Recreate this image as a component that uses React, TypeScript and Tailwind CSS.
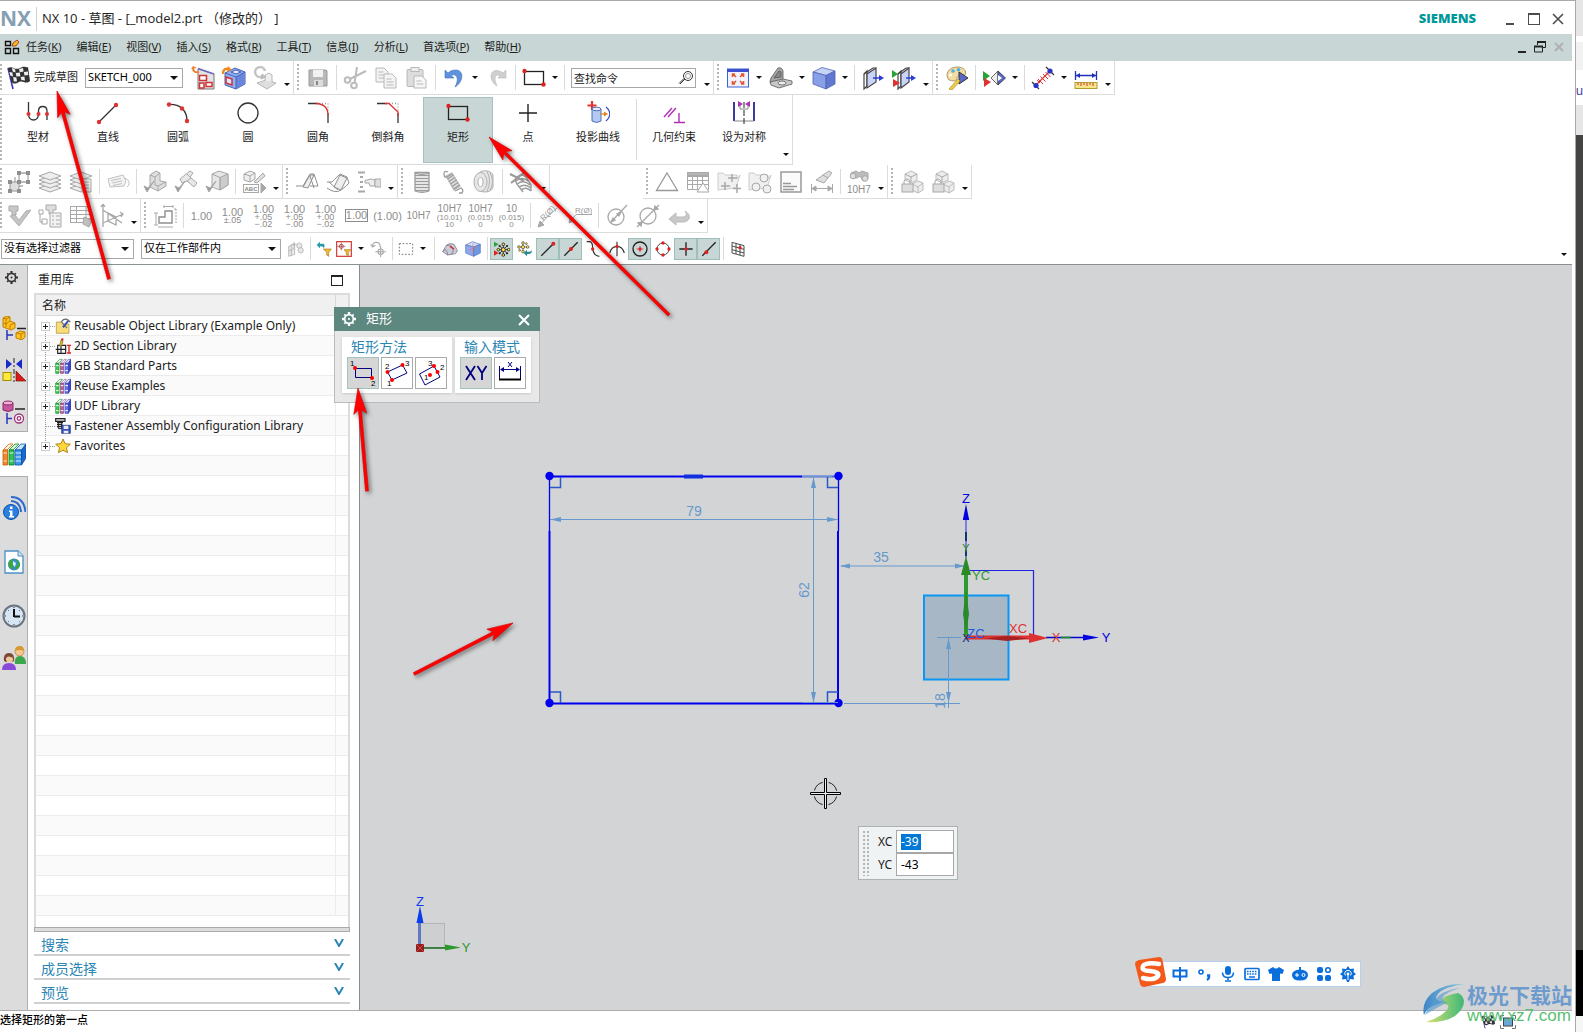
import type { ReactNode } from 'react';

interface IconProps {
  name: string;
  size?: string;
}

interface TreeNode {
  label: string;
  icon: string;
  leaf?: boolean;
}

const G = '#a8a8a8';
const LG = '#dedede';

const icons: Record<string, ReactNode> = {
  // finish / sketch
  flag: (
    <g>
      <path d="M2 2 L7 23" stroke="#3a35c8" strokeWidth="1.6" />
      <path d="M2 2 C6 -1 9 5 14 2 S20 2 22 1 L24 15 C20 19 17 14 13 16 S8 18 5.5 16Z" fill="#333" />
      <path d="M6 2l3 1 .6 3.5-3-1zM13 3l4-1 .6 3.5-3.8.8zM9.8 7l4-.4.6 3.6-4 .3zM17.8 6l4-.4.5 3.4-3.8.4zM3.4 6l3 .6.6 4-2.8-1zM7.2 11l3.2.4.6 4-3.2.2zM14.6 11l3.8-.6.6 4-3.6-.5z" fill="#eee" />
    </g>
  ),
  reattach: (
    <g>
      <path d="M7 3 L23 8 V23 H7Z" fill="#e4e4e8" stroke="#777" />
      <path d="M7 2.500 L23 8" stroke="#6a6ac0" strokeWidth="1.400" />
      <path d="M8.500 9.500h7v5h-7zM8.500 17h4.500v5H8.500zM15 16.500h6v4h-6z" fill="#fff" stroke="#c33" strokeWidth="1.500" />
      <path d="M8 6 C4 7 2 5 2 2" stroke="#f08030" strokeWidth="2" fill="none" />
      <path d="M0 3l2-3 4 2z" fill="#f08030" />
    </g>
  ),
  orient: (
    <g>
      <path d="M3 7 L13 2 L23 6 V18 L14 23 L3 19Z" fill="#8fb0f2" stroke="#4a62b8" />
      <path d="M14 11 L23 6 V18 L14 23Z" fill="#6a86dc" />
      <path d="M3 7 L14 11 V23 M14 11 L23 6" stroke="#4a62b8" fill="none" />
      <path d="M9 6l5-2 5 2-5 2z" fill="#e8eefc" stroke="#4a62b8" />
      <path d="M4 11 L10 13 V19 L4 17Z" fill="#dbe6ff" stroke="#c33" strokeWidth="1.500" />
      <path d="M1 8 C1 3 4 2 7 3" stroke="#f08a20" strokeWidth="2.500" fill="none" />
      <path d="M6 0l4 4-5 2z" fill="#f08a20" />
    </g>
  ),
  update: (
    <g stroke="#b8b8b8">
      <path d="M4 17 L13 14 L23 17 L14 23Z" fill={LG} />
      <path d="M12 15 V9 L16 7 L19 9 V16" fill="#eee" />
      <path d="M8 11 A5 5 0 1 1 12 5" fill="none" strokeWidth="2.500" stroke="#c4c4c4" />
      <path d="M9 8l-1 5 5-2z" fill="#bbb" />
    </g>
  ),
  save: (
    <g>
      <path d="M3 4h17l1 1v15H3z" fill="#b9b9b9" stroke="#999" />
      <rect x="7" y="4" width="10" height="7" fill="#f2f2f2" />
      <rect x="8" y="14" width="9" height="6" fill="#ddd" />
      <rect x="10" y="15" width="2" height="4" fill="#888" />
    </g>
  ),
  cut: (
    <g fill="none" stroke="#bcbcbc" strokeWidth="2">
      <circle cx="4.500" cy="14" r="2.800" />
      <circle cx="11" cy="19.500" r="2.800" />
      <path d="M7 13 L23 5 M11.500 17 L14 1" />
    </g>
  ),
  copy: (
    <g stroke="#b8b8b8" fill="#f4f4f4">
      <path d="M2 2h8l4 4v10H2z" />
      <path d="M4.500 6h5M4.500 9h7M4.500 12h7" />
      <path d="M10 8h8l4 4v10H10z" />
      <path d="M12.500 13h5M12.500 16h7M12.500 19h7" />
    </g>
  ),
  paste: (
    <g stroke="#b8b8b8">
      <rect x="2" y="3.500" width="16" height="17" rx="1" fill="#ddd" />
      <rect x="6" y="1.500" width="8" height="4" fill="#eee" />
      <path d="M9 10h8l4 4v8H9z" fill="#f6f6f6" />
      <path d="M11.500 15h5M11.500 18h7" />
    </g>
  ),
  undo: (
    <g>
      <path d="M3 4 V12 H12 L9 9.500 C14 7 18 12 13 21 C22 16 22 4 14 4 C10 4 8 5 6 7Z" fill="#5f92dc" stroke="#3f70bd" strokeWidth=".6" />
    </g>
  ),
  redo: <path d="M21 4 V12 H13 L15 10 C11 7 8 11 12 20 C4 15 4 4 12 4.500 C15 5 17 6 18 7Z" fill="#cfcfcf" stroke="#bbb" strokeWidth=".6" />,
  rect: (
    <g>
      <rect x="2.500" y="5.500" width="19" height="13" fill="none" stroke="#222" strokeWidth="1.300" />
      <circle cx="2.500" cy="5" r="2.200" fill="#d22" />
      <circle cx="21.500" cy="18.500" r="2.200" fill="#d22" />
    </g>
  ),
  fit: (
    <g>
      <rect x="1.500" y="3" width="21" height="18" fill="#f2f2ff" stroke="#3b62d0" />
      <path d="M1 3h22v3H1z" fill="#3b4fd0" />
      <g stroke="#e4572e" strokeWidth="1.600" fill="none">
        <path d="M10 11l-3-3M14 11l3-3M10 15l-3 3M14 15l3 3M6.500 11V8H9M17.500 11V8H15M6.500 15v3H9M17.500 15v3H15" />
      </g>
    </g>
  ),
  shade: (
    <g stroke="#555" strokeWidth=".8">
      <path d="M2 12 L9 2 Q13 1 14 5 V15 L8 19 L1 16Z" fill="#a8a8a8" />
      <path d="M1 16 L14 13 L23 15 V18 L10 22 L2 19Z" fill="#c8c8c8" />
      <ellipse cx="13" cy="17" rx="4" ry="2" fill="#eee" />
      <path d="M5 12 L10 5 L12 6 V11Z" fill="#888" />
    </g>
  ),
  cube: (
    <g stroke="#4f63b8" strokeWidth=".8">
      <path d="M1 6 L10 1.500 L23 5 L14 9.500Z" fill="#c6d4f6" />
      <path d="M1 6 L14 9.500 V23 L1 18Z" fill="#8aa0e6" />
      <path d="M14 9.500 L23 5 V18 L14 23Z" fill="#6078d0" />
    </g>
  ),
  section: (
    <g>
      <path d="M3 8 L6 5 V20 L3 23Z" fill="#fff" stroke="#444" strokeWidth="1.200" />
      <path d="M6 8 L15 2 V16 L6 22Z" fill="#c9d5f8" stroke="#444" strokeWidth="1.200" />
      <path d="M3 8 L12 2 H15" stroke="#444" strokeWidth="1.200" />
      <path d="M12 12h8" stroke="#2a3cd8" strokeWidth="1.500" />
      <path d="M18 9l5 3-5 3z" fill="#2a3cd8" />
    </g>
  ),
  section2: (
    <g>
      <path d="M6 8 L9 5 V20 L6 23Z" fill="#fff" stroke="#444" strokeWidth="1.200" />
      <path d="M9 8 L17 2 V16 L9 22Z" fill="#c9d5f8" stroke="#444" strokeWidth="1.200" />
      <path d="M6 8 L14 2 H17" stroke="#444" strokeWidth="1.200" />
      <path d="M14 12h7" stroke="#2a3cd8" strokeWidth="1.500" />
      <path d="M19 9l5 3-5 3z" fill="#2a3cd8" />
      <path d="M0 4l6 4-6 4z" fill="#2aa23a" />
      <path d="M1 13l7 4-7 4z" fill="#d33" />
    </g>
  ),
  palette: (
    <g>
      <path d="M4 14 C-1 8 4 1 12 1 C19 1 22 5 20 9 C17 11 13 8 12 12 C11 16 8 15 4 14Z" fill="#f3dca0" stroke="#9a8650" strokeWidth=".8" />
      <circle cx="8" cy="5" r="1.800" fill="#49b0e8" />
      <circle cx="13.500" cy="3.800" r="1.800" fill="#49b0e8" />
      <circle cx="5.500" cy="9" r="1.600" fill="#fff" />
      <path d="M14 6 L23 12 L14 18Z" fill="#5b68c8" stroke="#333" />
      <path d="M4 23 L13 13 L15 15 L7 24Z" fill="#f0d040" stroke="#a88a20" strokeWidth=".7" />
    </g>
  ),
  mirrorview: (
    <g>
      <path d="M1 5l7 5-7 5z" fill="#2aa23a" />
      <path d="M2 12l7 4-7 5z" fill="#d33" />
      <path d="M16 5 L9 12 L16 19Z" fill="#eee" stroke="#666" />
      <path d="M16 5 L23.500 12 L16 19Z" fill="#5b68c8" stroke="#445" />
      <path d="M16 9l4 3-4 3z" fill="#fff" />
    </g>
  ),
  pmi: (
    <g>
      <path d="M4 20 L19 5" stroke="#d33" strokeWidth="1.300" />
      <path d="M7 13l5 5M9.500 10.500l5 5M12 8l5 5M14.500 6l5 5M9 17l-3-3" stroke="#d33" />
      <path d="M1 16l7 7M15 1l8 8" stroke="#333" strokeWidth="1.200" />
      <circle cx="5" cy="19.500" r="2.600" fill="#2a35c8" />
      <circle cx="19" cy="5" r="2.600" fill="#2a35c8" />
    </g>
  ),
  measure: (
    <g>
      <path d="M1.500 5v9M22.500 5v9M2 9.500h20" stroke="#2030b8" strokeWidth="1.300" />
      <path d="M2 9.500l4-2.500v5zM22 9.500l-4-2.500v5z" fill="#2030b8" />
      <rect x="1" y="16.500" width="22" height="6" fill="#f7e58a" stroke="#b59a30" />
      <path d="M4 17v2M7 17v3M10 17v2M13 17v3M16 17v2M19 17v3" stroke="#c33" />
    </g>
  ),
  // sketch curves
  profile: (
    <g>
      <path d="M2.500 1 V13 C2.500 21 12.500 21 12.500 13 V10 C12.500 4 21 4 21 10 V19" fill="none" stroke="#333" strokeWidth="1.300" />
      <circle cx="2.500" cy="13" r="2" fill="#d33" />
      <circle cx="12.500" cy="13" r="2" fill="#d33" />
      <circle cx="21" cy="13" r="2" fill="#d33" />
    </g>
  ),
  line: (
    <g>
      <path d="M3 21 L20 4" stroke="#333" strokeWidth="1.300" />
      <circle cx="3" cy="21" r="2.200" fill="#d33" />
      <circle cx="20" cy="4" r="2.200" fill="#d33" />
    </g>
  ),
  arc: (
    <g>
      <path d="M3 3.500 C14 3 21 9 21 20" fill="none" stroke="#333" strokeWidth="1.300" />
      <circle cx="3" cy="3.500" r="2.200" fill="#d33" />
      <circle cx="16" cy="7.500" r="2.200" fill="#d33" />
      <circle cx="21" cy="20" r="2.200" fill="#d33" />
    </g>
  ),
  circle: <circle cx="12" cy="12" r="10" fill="none" stroke="#333" strokeWidth="1.300" />,
  fillet: (
    <g fill="none" strokeWidth="1.300">
      <path d="M13 2.500h9v9" stroke="#999" strokeDasharray="1 2" />
      <path d="M2 2.500h10M22 12v10" stroke="#333" />
      <path d="M10 2.500 C18 3 22 7 22 14" stroke="#d33" />
    </g>
  ),
  chamfer: (
    <g fill="none" strokeWidth="1.300">
      <path d="M13 2.500h9v9" stroke="#999" strokeDasharray="1 2" />
      <path d="M1 2.500h10M22 12v10" stroke="#333" />
      <path d="M9 2.500h4L22 11v4" stroke="#d33" />
    </g>
  ),
  point: <path d="M12 3v18M3 12h18" stroke="#222" strokeWidth="1.400" />,
  project: (
    <g>
      <path d="M6 0v9M1.500 4.500h9" stroke="#d33" strokeWidth="2.200" />
      <path d="M6 8 H15 V20 Q10.500 23 6 20Z" fill="#b5caf2" stroke="#5070b8" />
      <ellipse cx="10.500" cy="8" rx="4.500" ry="1.800" fill="#e4ecfb" stroke="#5070b8" />
      <path d="M14 13h5" stroke="#e08020" strokeWidth="1.300" />
      <path d="M18 10.500l4 2.500-4 2.500z" fill="#e08020" />
      <path d="M20 6 C25 10 25 16 20 20" fill="none" stroke="#3a50c0" strokeWidth="1.300" />
    </g>
  ),
  constrain: (
    <g stroke="#b030b8" strokeWidth="1.400">
      <path d="M2 16 L10 7 M6 16 L14 7 M17 12v9M12 21.500h11" />
    </g>
  ),
  symmetric: (
    <g fill="none">
      <path d="M2 1v19M22 1v19" stroke="#3a3aa0" strokeWidth="2" />
      <path d="M2 20h20M8 3v5h8V3" stroke="#888" />
      <path d="M12 1v22" stroke="#222" strokeDasharray="6 2" />
      <path d="M6 0l5 3-5 3zM18 0l-5 3 5 3z" fill="#b030b8" />
    </g>
  ),
  // features, greyed
  nodes: (
    <g stroke={G} fill="none" strokeWidth="1.300">
      <rect x="3" y="12" width="9" height="9" fill={LG} />
      <path d="M12 3h9v9h-9z M8 12 V7 M16 16 h-4" />
      <g fill="#8f8f8f" stroke="none">
        <path d="M1 10h4v4H1zM10 10h4v4h-4zM1 19h4v4H1zM10 19h4v4h-4zM10 1h4v4h-4zM19 1h4v4h-4zM19 10h4v4h-4z" />
      </g>
    </g>
  ),
  layers: (
    <g stroke={G} fill="#eee">
      <path d="M1 18l11-4 11 4-11 4z" />
      <path d="M1 14l11-4 11 4-11 4z" />
      <path d="M1 10l11-4 11 4-11 4z" />
      <path d="M1 6l11-4 11 4-11 4z" />
    </g>
  ),
  layerset: (
    <g stroke={G} fill="#eee">
      <path d="M1 18l11-4 8 4-8 4z" />
      <path d="M1 14l11-4 8 4-8 4z" />
      <path d="M1 10l11-4 8 4-8 4z" />
      <path d="M1 6l11-4 11 4-11 4z" />
      <path d="M13 9h9v13h-9z" />
      <path d="M15 12h5M15 15h5M15 18h5" />
    </g>
  ),
  tag: (
    <g stroke="#c2c2c2" fill="#f2f2f2">
      <path d="M2 9 L17 5 L20 11 L18 16 L4 17Z" />
      <path d="M5 10.500l10-2M6 13l10-2M7 15.500l9-2M18 8q6 1 5 7l-2 2" fill="none" />
    </g>
  ),
  check1: (
    <g stroke={G}>
      <path d="M7 5 L13 1 L17 3 V11 L23 12 V16 L15 21 L7 17Z" fill={LG} />
      <path d="M7 5l5 2v8l3 1 8-4M12 7l5-4M15 16v5" fill="none" />
      <path d="M1 16 L4 22 L11 11 L5 18Z" fill="#999" />
    </g>
  ),
  check2: (
    <g stroke={G}>
      <path d="M6 9 L16 1 L19 3 L16 7 L23 13 L20 17 L13 11 L8 13Z" fill="#e8e8e8" />
      <path d="M13 4l3 3M13 11l4-3" fill="none" />
      <path d="M1 16 L4 22 L11 11 L5 18Z" fill="#999" />
    </g>
  ),
  check3: (
    <g stroke={G}>
      <path d="M7 4 L14 1 L23 4 V15 L15 20 L7 17Z" fill="#e6e6e6" />
      <path d="M15 7.500 L23 4 V15 L15 20Z" fill="#ccc" />
      <path d="M7 4 L15 7.500 V20" fill="none" />
      <path d="M1 16 L4 22 L11 11 L5 18Z" fill="#999" />
    </g>
  ),
  abc: (
    <g stroke={G} fill="#eee">
      <path d="M2 4 L8 1 L13 3 V9 L8 12 L2 10Z" />
      <path d="M2 4l6 2 5-3M8 6v6" fill="none" />
      <path d="M12 12 L21 3 L23 6 L15 13Z" fill={LG} />
      <rect x="1.500" y="14.500" width="15" height="8" fill="#fff" />
      <text x="2.500" y="21" fontSize="6" fontWeight="700" stroke="none" fill="#888" fontFamily="Liberation Sans">
        ABC
      </text>
      <path d="M19 13l5 5-5 5z" fill={G} />
    </g>
  ),
  bend1: (
    <g stroke="#8f8f8f" fill="#eee">
      <path d="M1 16h7M8 16 L15 4h4l4 12M15 16h8" fill="none" />
      <path d="M8 17 L15 5 L19 5 L13 18Z" />
      <path d="M15 6l4 12" fill="none" />
    </g>
  ),
  bend2: (
    <g stroke="#8f8f8f" fill="#eee">
      <path d="M1 12h5L14 4l7 3 2 6" fill="none" />
      <path d="M8 17 L14 5 L21 8 L15 20Z" />
      <path d="M1 18 q8 6 14 2 t8-7M3 12l9 8" fill="none" />
    </g>
  ),
  ruler: (
    <g stroke={G} fill="#eee">
      <path d="M1 2.500h7M1 21.500h7M3 7h3M3 12h3M3 17h3" strokeWidth="2" />
      <path d="M8 10.500 L14 9 L18 10 V16 H13 L12 13 H8Z" />
      <path d="M18 9h6v8h-6z" fill={LG} />
    </g>
  ),
  spring: (
    <g stroke="#9a9a9a" fill="#ececec" strokeWidth="1.300">
      <path d="M5 2.500h14M5 5.500h14M5 8.500h14M5 11.500h14M5 14.500h14M5 17.500h14M5 20.500h14" strokeWidth="1.600" />
      <path d="M5 3q7 2.500 14 0M5 21q7 2.500 14 0" fill="none" />
      <path d="M5 2v19M19 2v19" />
    </g>
  ),
  spring2: (
    <g stroke="#9a9a9a" fill="none" strokeWidth="1.300">
      <path d="M5 6 L11 3 L19 16 L13 20Z" fill={LG} stroke="#bbb" />
      <path d="M7 2q-4-2-4 2t3 3l5-3M6.500 9l6-4M8 11.500l6-4M9.500 14l6-4M11 16.500l6-4M12.500 19l6-4M14 21l6-3q3 2 1 5h-3" />
    </g>
  ),
  roller: (
    <g stroke="#b0b0b0" fill="#e6e6e6">
      <path d="M8 2 C14 -1 20 2 21 5 V17 C20 22 13 23 8 21Z" />
      <ellipse cx="8.500" cy="12" rx="6.500" ry="9.500" />
      <ellipse cx="8.500" cy="12" rx="2.500" ry="4.500" fill="#fff" />
      <path d="M15 1.500q5 9 0 20M18 2.500q5 9 0 18" fill="none" />
    </g>
  ),
  springdel: (
    <g stroke="#9a9a9a" fill="none" strokeWidth="1.400">
      <path d="M8 7q5-4 9 0M7 11q6-5 12 0M8 14q7-5 13 1M10 17q6-4 12 1M12 20q5-4 10 1M8 7q-3 3 0 7l6 8M17 7l5 8v6" />
      <path d="M1 4l14 7M2 13L16 2" strokeWidth="2.200" />
    </g>
  ),
  triangle: <path d="M12 3 L22.500 20.500 H1.500Z" fill="none" stroke="#999" strokeWidth="1.300" />,
  tabletri: (
    <g stroke={G} fill="none">
      <path d="M1.500 2.500h21v17h-21zM1.500 6.500h21M1.500 10.500h21M1.500 14.500h21M6.500 6v13M11.500 6v13M16.500 6v13" />
      <path d="M1.500 2.500h21v3h-21z" fill="#b5b5b5" />
      <path d="M17 13 L23 22 H11Z" fill="#fff" />
    </g>
  ),
  folder1: (
    <g stroke={G} fill="#f0f0f0">
      <path d="M1 20 V3 H6 L8 5 H20 V9 L23 5 L19 18Z" stroke="#ccc" />
      <path d="M15 4v8M11 8h9M8 12v8M4 16h9M20 14v9M16 18.500h8" strokeWidth="1.500" />
    </g>
  ),
  folder2: (
    <g stroke={G} fill="#f0f0f0">
      <path d="M1 20 V3 H6 L8 5 H20 V9 L23 5 L19 18Z" stroke="#ccc" />
      <circle cx="16" cy="8" r="4" />
      <circle cx="8" cy="17" r="4" />
      <circle cx="19" cy="19" r="4" />
    </g>
  ),
  note: (
    <g stroke="#999" fill="none">
      <rect x="2" y="2" width="20" height="20" strokeWidth="1.500" fill="#fafafa" />
      <path d="M4 13.500h8M4 16.500h14M4 19.500h11" strokeWidth="1.300" />
    </g>
  ),
  brushdim: (
    <g stroke={G} fill={LG}>
      <path d="M6 10 L13 5 L19 1 L22 3 L18 8 L14 13Z" />
      <path d="M13 5l5 3" />
      <path d="M1.500 14v9M22.500 14v9M2 18.500h20" />
      <path d="M2 18.500l4-2.500v5zM22 18.500l-4-2.500v5z" fill={G} />
    </g>
  ),
  binoc: (
    <g>
      <path d="M4 3 L9 1 L12 3 L15 1 L21 3 L21 9 L16 11 L13 6 L10 8 L4 8Z" fill="#bcbcbc" stroke={G} />
      <circle cx="6" cy="6" r="2.800" fill={LG} stroke={G} />
      <circle cx="18" cy="8.500" r="2.800" fill={LG} stroke={G} />
      <text x="0" y="23" fontSize="10" fill="#8c8c8c" fontFamily="Liberation Sans">
        10H7
      </text>
    </g>
  ),
  lockcubes: (
    <g stroke="#bcbcbc" fill="#ededed">
      <path d="M5 4 L11 1 L17 4 V10 L11 13 L5 10Z" />
      <path d="M12 14 L18 11 L23 13 V20 L18 23 L12 20Z" />
      <path d="M12 14l6 3 5-4M18 17v6" fill="none" />
      <rect x="2" y="14" width="11" height="8" fill={LG} stroke={G} />
      <path d="M4 14v-3q3-4 6 0v3M5 4l6 3 6-3M11 7v5" fill="none" stroke={G} />
    </g>
  ),
  // drafting, greyed
  tickpencil: (
    <g>
      <path d="M2 2h9v5H9v4H5V7H2z" fill="#c8c8c8" stroke={G} />
      <path d="M3 12 L12 22 L24 6 L19 7 L12 16 L8 11Z" fill="#c4c4c4" stroke="#b0b0b0" />
    </g>
  ),
  listpencil: (
    <g stroke={G} fill={LG}>
      <path d="M8 1h10v5h-3v4h-4V6H8z" />
      <path d="M1 6h4v4H1zM4 15h5v5H4zM2 10v8h3" fill="none" />
      <path d="M12 9h11v14H12z" fill="#f2f2f2" />
      <path d="M14 12h2M14 16h2M14 20h2M18 12h4M18 16h4M18 20h4" />
    </g>
  ),
  grid: (
    <g stroke={G} fill="none">
      <path d="M1.500 2.500h20M1.500 6.500h20M1.500 10.500h20M1.500 14.500h20M1.500 18.500h14M1.500 2v17M7.500 2v17M17 2v12" />
      <path d="M15 13l8 3-3 7-6-3z" fill="#c0c0c0" />
    </g>
  ),
  axes: (
    <g stroke={G} fill="none" strokeWidth="1.300">
      <path d="M3 1v22M1 3l2-3 2 3M3 6L22 19M3 19L23 10M8 9v8l8 4v-8zM20 8l3 2-2 3" />
    </g>
  ),
  profiledim: (
    <g stroke={G} fill="none">
      <path d="M3 9v12M1 9h4M1 21h4M11 2.500h9M11 1v3M20 1v3M5 23h15" />
      <path d="M6 19v-6h6V7h7v12z" stroke="#8f8f8f" strokeWidth="1.400" />
      <path d="M23 5v15M21 5h3" strokeDasharray="2 1" />
    </g>
  ),
  radial1: (
    <g stroke={G} fill={G}>
      <path d="M2 22 L10 13 L20 4" fill="none" />
      <path d="M1 23l2-6 4 4z" />
      <text x="4" y="15" fontSize="8" stroke="none" fill="#999" fontFamily="Liberation Sans" transform="rotate(-45 8 13)">
        R(Ø)
      </text>
    </g>
  ),
  radial2: (
    <g stroke={G} fill={G}>
      <path d="M2 17 L8 10.500 H24" fill="none" />
      <path d="M1 19l1-5 4 3z" />
      <text x="7" y="9" fontSize="8" stroke="none" fill="#999" fontFamily="Liberation Sans">
        R(Ø)
      </text>
    </g>
  ),
  diameter1: (
    <g stroke={G} fill="none" strokeWidth="1.300">
      <circle cx="11" cy="13" r="8" />
      <path d="M6 18 L22 1" />
      <path d="M6 18l2-4 2 2zM16 8l-2 4-2-2z" fill={G} />
    </g>
  ),
  diameter2: (
    <g stroke={G} fill="none" strokeWidth="1.300">
      <circle cx="12" cy="12" r="8" />
      <path d="M1 23 L23 1" />
      <path d="M6 18l-4 1 3 3zM18 6l4-1-3-3z" fill={G} />
    </g>
  ),
  back: <path d="M2 15 L9 9 V13 H16 C20 13 20 9 18 7 C25 11 23 18 16 18 H9 V21Z" fill="#c8c8c8" stroke="#bbb" />,
  // selection bar
  selA: (
    <g stroke={G} fill="#e8e8e8">
      <path d="M1 8 L10 4 V20 L1 23Z M1 15l9-4M5 6v16" />
      <path d="M9 1v9M5 5h9" />
      <circle cx="17" cy="7" r="4" />
      <circle cx="19" cy="14" r="4" />
    </g>
  ),
  selB: (
    <g>
      <path d="M1 6l5-5v3h5q4 2 0 7 1-3-5-3v3z" fill="#2a9aa8" />
      <path d="M11 12h12l-4 5v6l-3-2v-4z" fill="#f2b93a" stroke="#b07a10" />
    </g>
  ),
  selC: (
    <g>
      <rect x="1" y="1" width="22" height="22" fill="#fff" stroke="#d23a3a" strokeWidth="1.800" />
      <circle cx="8" cy="8" r="3" fill="none" stroke="#a33" strokeWidth="1.300" />
      <path d="M8 2v12M2 8h12" stroke="#a33" />
      <path d="M12 13h10l-3.500 4v5l-3-1.500V17z" fill="#f2b93a" stroke="#b07a10" />
    </g>
  ),
  selD: (
    <g stroke={G} fill="none" strokeWidth="1.600">
      <path d="M4 8q-1-6 6-6 6 1 5 7M1 5l3 4 4-3" />
      <circle cx="16" cy="16" r="4" />
      <path d="M16 8v16M8 16h16" />
    </g>
  ),
  selE: <path d="M2 4h20v16H2z" fill="none" stroke="#777" strokeWidth="1.500" strokeDasharray="2.500 2.500" />,
  selF: (
    <g stroke="#667">
      <path d="M1 16 L7 6 Q12 2 18 5 L23 14 Q22 20 15 20 L8 21Z" fill="#c9ccd6" />
      <path d="M7 7 q7-4 10 8 l-3 5M1 16 q5-8 8 5" fill="none" />
      <path d="M12 8l6 4" stroke="#d22" strokeWidth="2" />
    </g>
  ),
  selG: (
    <g stroke="#5070c0">
      <path d="M1 6 L11 1 L23 5 L13 9Z" fill="#d5e0fa" />
      <path d="M1 6 L13 9 V23 L1 18Z" fill="#8fa8ee" />
      <path d="M13 9 L23 5 V18 L13 23Z" fill="#6f9ae0" />
      <path d="M12 3v16M6 14l12-6" stroke="#e07070" />
    </g>
  ),
  snapAll: (
    <g>
      <path d="M0 1l7 4-7 4z" fill="#2aa23a" />
      <path d="M0 14l7 4-7 4z" fill="#d22" />
      <path d="M8 7l12 12M8 19L20 7M14 4v18M6 13h17" stroke="#222" strokeWidth="1.300" />
      <g fill="#ffe04a" stroke="#222" strokeWidth="1.300">
        <circle cx="14" cy="13" r="3" />
        <circle cx="14" cy="5" r="2" />
        <circle cx="14" cy="21" r="2" />
        <circle cx="6.500" cy="13" r="2" />
        <circle cx="22" cy="13" r="2" />
      </g>
      <g fill="#222">
        <circle cx="8.500" cy="7.500" r="1.600" />
        <circle cx="19.500" cy="7.500" r="1.600" />
        <circle cx="8.500" cy="18.500" r="1.600" />
        <circle cx="19.500" cy="18.500" r="1.600" />
      </g>
    </g>
  ),
  snapSet: (
    <g>
      <path d="M9 1v17M1 9h17" stroke="#555" />
      <g fill="#ffe04a" stroke="#444">
        <circle cx="9" cy="9" r="2.500" />
        <circle cx="9" cy="3" r="2" />
        <circle cx="3" cy="9" r="2" />
        <circle cx="16" cy="9" r="2" />
        <circle cx="9" cy="16" r="2" />
        <circle cx="14" cy="4" r="1.400" />
        <circle cx="4" cy="14" r="1.400" />
      </g>
      <path d="M10 18l5-5v3h4q4-2 2-4 4 8-6 8v3z" fill="#2a8a98" />
    </g>
  ),
  snapEnd: (
    <g>
      <path d="M2 22 L20 4" stroke="#222" strokeWidth="2" />
      <circle cx="20" cy="4" r="3" fill="#d22" />
    </g>
  ),
  snapMid: (
    <g>
      <path d="M2 22 L22 2" stroke="#222" strokeWidth="2" />
      <circle cx="12" cy="12" r="3" fill="#d22" />
    </g>
  ),
  snapPole: (
    <g>
      <path d="M1 1 H6 Q10 2 10 11 Q11 22 20 23" fill="none" stroke="#333" strokeWidth="1.700" />
      <circle cx="10" cy="12" r="2.500" fill="#d22" />
    </g>
  ),
  snapInt: (
    <g>
      <path d="M12 1v22M1 18 Q4 8 12 8 T23 18" fill="none" stroke="#333" strokeWidth="1.700" />
      <circle cx="12" cy="8" r="2.500" fill="#d22" />
    </g>
  ),
  snapCen: (
    <g>
      <circle cx="12" cy="12" r="10.500" fill="none" stroke="#222" strokeWidth="2" />
      <circle cx="12" cy="12" r="2.500" fill="#d22" />
      <path d="M12 7v10M7 12h10" stroke="#d22" />
    </g>
  ),
  snapQuad: (
    <g>
      <circle cx="12" cy="12" r="9" fill="none" stroke="#444" strokeWidth="1.500" />
      <g fill="#d22">
        <circle cx="12" cy="3" r="2.500" />
        <circle cx="12" cy="21" r="2.500" />
        <circle cx="3" cy="12" r="2.500" />
        <circle cx="21" cy="12" r="2.500" />
      </g>
    </g>
  ),
  snapPt: (
    <g>
      <path d="M12 2v20M2 12h20" stroke="#222" strokeWidth="2" />
      <circle cx="12" cy="12" r="2.500" fill="#d22" />
    </g>
  ),
  snapOn: (
    <g>
      <path d="M2 22 L22 2" stroke="#222" strokeWidth="2" />
      <circle cx="8" cy="17" r="3" fill="#d22" />
    </g>
  ),
  snapGrid: (
    <g stroke="#333" fill="none" strokeWidth="1.300">
      <path d="M3 2 L21 7 V23 L3 18ZM3 7.500l18 5M3 13l18 5M9 3.500v16M15 5v16" />
      <circle cx="15" cy="10" r="2.500" fill="#d22" stroke="none" />
    </g>
  ),
  // resource bar
  gear: (
    <g>
      <circle cx="12" cy="12" r="7.500" fill="none" stroke="currentColor" strokeWidth="3" />
      <circle cx="12" cy="12" r="1.800" fill="currentColor" />
      <g fill="currentColor">
        <path d="M10 0h4v4h-4zM10 20h4v4h-4zM0 10h4v4H0zM20 10h4v4h-4zM3 5l2-2 3 3-2 2zM16 18l2-2 3 3-2 2zM3 19l3-3 2 2-3 3zM16 6l3-3 2 2-3 3z" />
      </g>
    </g>
  ),
  assy: (
    <g>
      <path d="M1 2l4-2 3 1v4l5 2v5l-4 2-8-3z" fill="#ffc21f" stroke="#c08000" />
      <path d="M1 2l3 1 4-2M4 3v8M1 7l3 1 4-3M8 9l5-2M8 9v4" stroke="#c08000" fill="none" />
      <path d="M15 12.500h9" stroke="#222" strokeWidth="1.500" />
      <path d="M5 14v10M5 19h6" stroke="#2a35b8" strokeWidth="1.500" />
      <path d="M14 17l4-2 5 1v5l-3 3-6-2z" fill="#ffc21f" stroke="#c08000" />
      <path d="M14 17l5 1 4-2M19 18v5" stroke="#c08000" fill="none" />
    </g>
  ),
  constraints: (
    <g>
      <path d="M4 1l6 5-6 5zM20 1l-6 5 6 5z" fill="#1a28c8" />
      <path d="M12 0v24" stroke="#222" strokeDasharray="5 2 2 2" />
      <rect x="1" y="14.500" width="8" height="8" fill="#ffec3a" stroke="#a88a00" />
      <path d="M14 13v10h10z" fill="#d81a1a" stroke="#7a0000" strokeWidth=".6" />
    </g>
  ),
  partnav: (
    <g>
      <path d="M1 3v7q5 3 10 0V3" fill="#c9559c" stroke="#8a2a68" />
      <ellipse cx="6" cy="3" rx="5" ry="2" fill="#efb0d4" stroke="#8a2a68" />
      <path d="M13 9h10" stroke="#222" strokeWidth="1.500" />
      <path d="M5 13v11M5 18.500h5" stroke="#2a35b8" strokeWidth="1.500" />
      <circle cx="17" cy="18.500" r="4.500" fill="#fff" stroke="#a0307a" strokeWidth="1.300" />
      <circle cx="17" cy="18.500" r="1.800" fill="#fff" stroke="#a0307a" strokeWidth="1.300" />
    </g>
  ),
  books: (
    <g strokeWidth=".8" strokeLinejoin="round">
      <path d="M1 8l6-6h4l-6 6z" fill="#fff0dc" stroke="#d07010" />
      <path d="M1 8h4.500v15H1z" fill="#f5872a" stroke="#c05a00" />
      <path d="M7 8l6-6h4l-6 6z" fill="#d4f6d8" stroke="#0a8a28" />
      <path d="M7 8h5v15H7z" fill="#2fc454" stroke="#0a7a28" />
      <path d="M13 8l6-6h5l-4 6z" fill="#c8e4fc" stroke="#0a58b0" />
      <path d="M13 8h6.500v15H13z" fill="#3a96f0" stroke="#0a50a8" />
      <path d="M19.500 8l4.500-6v14l-4.500 7z" fill="#1a68c8" stroke="#0a50a8" />
      <path d="M1.500 11h3.500M1.500 19h3.500M7.500 11h4M7.500 19h4M13.500 11h5.500M13.500 15h5.500M13.500 19h5.500" stroke="#fff" />
    </g>
  ),
  info: (
    <g>
      <circle cx="9" cy="16" r="7.500" fill="#2a80e0" stroke="#1050a8" />
      <path d="M8 10.500h2.500v2.500H8zM7 14.500h3.500V20H12v1.500H7V20h1v-4H7z" fill="#fff" />
      <path d="M9 5q9 0 10 11M9 1q13 0 14.500 15" stroke="#2a6ad0" strokeWidth="2" fill="none" />
    </g>
  ),
  webdoc: (
    <g>
      <path d="M3 1h13l5 5v17H3z" fill="#fff" stroke="#4a90c8" strokeWidth="1.300" />
      <path d="M16 1v5h5" fill="#cfe4f4" stroke="#4a90c8" />
      <circle cx="12" cy="14.500" r="6" fill="#3a8ad8" />
      <path d="M6.500 12q2-3 5-3.500l-1 3 1 4-1 4q-5-2-4-7.500zM14 9q4 2 4 6-1 4-5 5l1-4 2-2z" fill="#3aa83a" />
      <path d="M11 11l3 2-1 4-2-2z" fill="#d8ecff" />
    </g>
  ),
  clock: (
    <g>
      <circle cx="12" cy="12" r="10.500" fill="#d6e4f4" stroke="#6a7480" strokeWidth="2" />
      <path d="M12 5v8M12 12.500h6" stroke="#111" strokeWidth="2" />
      <path d="M12 3v1M12 20v1M3 12h1M20 12h1M6 6l.6.6M17.500 17.500l.6.6M18 6l-.6.6M6 18l.6-.6" stroke="#333" />
    </g>
  ),
  people: (
    <g>
      <path d="M13 18q-1-8 5-8 6 0 6 8z" fill="#3aa84a" />
      <circle cx="17.500" cy="5.500" r="4.500" fill="#f4c890" stroke="#a86a20" strokeWidth=".6" />
      <path d="M13 5q0-5 5-5 4 0 4 5-4-2-9 0z" fill="#d89a30" />
      <path d="M0 24q0-7 7-7 7 0 7 7z" fill="#8a4ad8" />
      <path d="M2 15q-1-8 5-8 6 0 5 8l-2 1H4z" fill="#7a4a34" />
      <circle cx="7.500" cy="13" r="3.500" fill="#f0c8a0" />
      <path d="M4 12q2-3 7 0-1-4-4-4t-3 4z" fill="#7a4a34" />
    </g>
  ),
  // tree
  folderTools: (
    <g>
      <path d="M2 6h8l2 3h9v14H2z" fill="#f6dc7a" stroke="#a88a30" />
      <path d="M9 5l9 10" stroke="#778" strokeWidth="2" />
      <path d="M20 4l-8 10" stroke="#3a50b8" strokeWidth="3" />
      <path d="M10 5q3-4 8-3M18 2l5 4" stroke="#666" strokeWidth="2" fill="none" />
    </g>
  ),
  sectionLib: (
    <g fill="none">
      <path d="M4 11h12v12H4zM4 17h12M9 11v12M1 17h3" stroke="#222" strokeWidth="1.700" />
      <path d="M7 12l2-9 3 1-2 8z" fill="#f0c020" stroke="#806010" />
      <path d="M9 3l1-3 3 1-1 3z" fill="#d22" />
      <path d="M18 11h6M18 22.500h6M21 11v11" stroke="#d22" strokeWidth="2" />
    </g>
  ),
  bolt: (
    <g>
      <path d="M1 1h14v4H1zM3 7h9M3 10h8M3 13h7" stroke="#222" strokeWidth="1.700" fill="#ddd" />
      <path d="M5 5v11h5V5" stroke="#222" strokeWidth="1.500" />
      <path d="M10 11h13v12H10z" fill="#3a52b8" stroke="#1a2a70" />
      <path d="M13 11.500h7v5h-7zM13 19h7v4h-7z" fill="#e8ecfa" />
    </g>
  ),
  lib: (
    <g strokeWidth=".8" strokeLinejoin="round">
      <path d="M1 8l6-6h4l-5 6z" fill="#e4fbe4" stroke="#0a7a20" />
      <path d="M1 8h5v15H1z" fill="#3ad048" stroke="#0a7a20" />
      <path d="M8 8l6-6h3l-4 6z" fill="#f0e4fb" stroke="#804080" />
      <path d="M8 8h5v15H8z" fill="#b0609a" stroke="#703060" />
      <path d="M15 8l5-6h4l-4 6z" fill="#d8dcff" stroke="#2a30a0" />
      <path d="M15 8h5v15h-5z" fill="#6a7af4" stroke="#2a30a0" />
      <path d="M20 8l4-6v15l-4 6z" fill="#3a48c8" stroke="#2a30a0" />
      <path d="M1.500 11.500h4M1.500 19h4M8.500 11.500h4M8.500 19h4M15.500 11.500h4M15.500 19h4" stroke="#fff" strokeWidth="1.500" />
    </g>
  ),
  star: <path d="M12 1.500l3.200 7 7.800.8-5.800 5.200 1.600 7.500L12 18.200 5.200 22l1.600-7.500L1 9.300l7.800-.8z" fill="#ffd83a" stroke="#a87a10" strokeWidth="1.400" />,
};

function Icon({ name, size = 'size-6' }: IconProps) {
  return (
    <svg viewBox="0 0 24 24" className={`${size} shrink-0`} fill="none" aria-hidden="true">
      {icons[name]}
    </svg>
  );
}

function Tri() {
  return (
    <svg viewBox="0 0 6 3" className="h-[3px] w-[6px]" aria-hidden="true">
      <path d="M0 0h6L3 3z" fill="#111" />
    </svg>
  );
}

function Toolbar({ children, first = false }: { children: ReactNode; first?: boolean }) {
  return (
    <div className="flex items-center border-r border-b border-[#dcdcdc]">
      <span className={`flex shrink-0 self-stretch py-[3px] ${first ? 'w-[3px]' : 'w-2 pl-[3px]'}`}>
        <span className="w-[2px] bg-[repeating-linear-gradient(to_bottom,#b4b4b4_0_2px,transparent_2px_4px)]" />
      </span>
      {children}
    </div>
  );
}

function Tool({ icon, children }: { icon?: string; children?: ReactNode }) {
  return (
    <button type="button" aria-label={icon} className="flex h-7 w-[31px] shrink-0 items-center justify-center">
      {icon ? <Icon name={icon} /> : children}
    </button>
  );
}

function Tools({ names }: { names: string[] }) {
  return (
    <>
      {names.map((n, i) => (
        <Tool key={n + i} icon={n} />
      ))}
    </>
  );
}

function Drop() {
  return (
    <button type="button" aria-label="more" className="flex h-6 w-3 shrink-0 items-center justify-center">
      <Tri />
    </button>
  );
}

function End() {
  return (
    <button type="button" aria-label="options" className="flex w-[13px] shrink-0 items-end justify-center self-stretch pb-2">
      <Tri />
    </button>
  );
}

function Sep() {
  return (
    <span className="flex w-[6px] shrink-0 justify-center self-stretch py-1">
      <span className="w-px bg-[#dadada]" />
    </span>
  );
}

function Combo({ label, value, width }: { label: string; value: string; width: string }) {
  return (
    <div className={`relative shrink-0 ${width}`}>
      <select aria-label={label} className="block h-5 w-full appearance-none border border-[#a8a8a8] bg-white pl-[2px] text-[11px] text-black">
        <option>{value}</option>
      </select>
      <svg viewBox="0 0 8 4" className="pointer-events-none absolute top-2 right-[5px] h-1 w-2" aria-hidden="true">
        <path d="M0 0h8L4 4z" fill="#111" />
      </svg>
    </div>
  );
}

function Tol({ main, subs = [] }: { main: string; subs?: string[] }) {
  const small = main.startsWith('10');
  return (
    <Tool>
      <span className="flex flex-col items-center font-['Liberation_Sans'] text-[#8c8c8c]">
        <span className={small ? 'text-[10px] leading-[10px]' : 'text-[11px] leading-[10px]'}>{main}</span>
        {subs.map((s) => (
          <span key={s} className={small ? 'text-[8px] leading-[7px]' : 'text-[9px] leading-[7px]'}>
            {s}
          </span>
        ))}
      </span>
    </Tool>
  );
}

function BigTool({ icon, label, active = false }: { icon: string; label: string; active?: boolean }) {
  return (
    <button
      type="button"
      className={`flex h-[66px] w-[70px] shrink-0 flex-col items-center gap-1 border pt-[3px] text-[11px] leading-4 ${
        active ? 'border-[#a4c2be] bg-[#c8d7d5]' : 'border-transparent'
      }`}
    >
      <Icon name={icon} />
      {label}
    </button>
  );
}

function Snap({ icon, active = false }: { icon: string; active?: boolean }) {
  return (
    <button
      type="button"
      aria-label={icon}
      aria-pressed={active}
      className={`flex h-[22px] w-[23px] shrink-0 items-center justify-center border ${
        active ? 'border-[#9cbfba] bg-[#c8d7d5]' : 'border-transparent'
      }`}
    >
      <Icon name={icon} size="size-4" />
    </button>
  );
}

function Filter({ icon }: { icon: string }) {
  return (
    <button type="button" aria-label={icon} className="flex h-5 w-5 shrink-0 items-center justify-center">
      <Icon name={icon} size="size-4" />
    </button>
  );
}

function FilterDrop() {
  return (
    <button type="button" aria-label="more" className="flex h-5 w-[14px] shrink-0 items-center justify-center">
      <Tri />
    </button>
  );
}

function FilterSep() {
  return (
    <span className="flex w-2 shrink-0 justify-center self-stretch py-1">
      <span className="w-px bg-[#dadada]" />
    </span>
  );
}

const menus: [string, string][] = [
  ['任务', 'K'],
  ['编辑', 'E'],
  ['视图', 'V'],
  ['插入', 'S'],
  ['格式', 'R'],
  ['工具', 'T'],
  ['信息', 'I'],
  ['分析', 'L'],
  ['首选项', 'P'],
  ['帮助', 'H'],
];

function TitleBar() {
  return (
    <header className="flex h-[33px] shrink-0 items-center bg-white pt-[2px] pr-2">
      <span className="w-9 font-['Open_Sans'] text-[21px] leading-none font-bold text-[#879fb2]">NX</span>
      <span className="mr-[5px] h-6 w-px bg-[#d0d0d0]" />
      <h1 className="font-['Open_Sans','Noto_Sans_CJK_SC',sans-serif] text-[13px] whitespace-pre">NX 10 - 草图 - [_model2.prt （修改的） ]</h1>
      <span className="mr-[30px] ml-auto font-['Open_Sans'] text-[13px] font-extrabold text-[#009999]">SIEMENS</span>
      <div className="flex items-center gap-3 text-[#4c4c4c]">
        <button type="button" aria-label="minimize" className="flex h-3 w-[10px] items-end">
          <span className="h-[2px] w-2 bg-current" />
        </button>
        <button type="button" aria-label="maximize" className="h-3 w-3 border border-t-2 border-current" />
        <button type="button" aria-label="close">
          <svg viewBox="0 0 12 12" className="size-3" stroke="currentColor" strokeWidth="1.600">
            <path d="M1 1l10 10M11 1L1 11" />
          </svg>
        </button>
      </div>
    </header>
  );
}

function MenuBar() {
  return (
    <nav className="flex h-[27px] shrink-0 items-center bg-[#c8d7d5] pr-2 pb-px text-[11px]">
      <svg viewBox="0 0 16 16" className="mr-[6px] ml-1 size-4" fill="none" stroke="#111" aria-hidden="true">
        <path d="M1.500 2.500h5v4h-5zM1.500 9.500h5v5h-5zM9.500 9.500h5v5h-5z" strokeWidth="1.400" />
        <path d="M8 7l1-3 4-3 2 2-3 4z" fill="#f4b824" stroke="#a02a10" strokeWidth=".8" />
      </svg>
      <ul className="flex gap-[15px]">
        {menus.map(([name, key]) => (
          <li key={key}>
            <button type="button">
              {name}(<span className="underline">{key}</span>)
            </button>
          </li>
        ))}
      </ul>
      <div className="ml-auto flex items-center gap-2">
        <button type="button" aria-label="minimize window" className="flex h-3 items-end">
          <span className="h-[2px] w-2 bg-[#222]" />
        </button>
        <button type="button" aria-label="restore window">
          <svg viewBox="0 0 12 12" className="size-3" fill="none" stroke="#222">
            <path d="M3.500 4V1.500h8v5H9" />
            <path d="M3 1h9M0 5.500h9" strokeWidth="2" />
            <path d="M.5 5.500h8v5.500h-8z" />
          </svg>
        </button>
        <button type="button" aria-label="close window">
          <svg viewBox="0 0 10 10" className="size-[10px]" stroke="#b0b0b0" strokeWidth="2">
            <path d="M1 1l8 8M9 1L1 9" />
          </svg>
        </button>
      </div>
    </nav>
  );
}

function Ribbon() {
  return (
    <>
      <div className="flex h-[34px] shrink-0">
        <Toolbar first>
          <button type="button" className="mr-[7px] flex items-center gap-1 pl-[3px] text-[11px]">
            <Icon name="flag" />
            <span className="whitespace-nowrap">完成草图</span>
          </button>
          <Combo label="草图名" value="SKETCH_000" width="w-[98px] mr-1" />
          <Tools names={['reattach', 'orient', 'update']} />
          <End />
        </Toolbar>
        <Toolbar>
          <Tool icon="save" />
          <Sep />
          <Tools names={['cut', 'copy', 'paste']} />
          <Sep />
          <Tool icon="undo" />
          <Drop />
          <Tool icon="redo" />
          <Sep />
          <Tool icon="rect" />
          <Drop />
          <Sep />
          <div className="relative mx-1">
            <input aria-label="查找命令" defaultValue="查找命令" className="block h-5 w-[125px] border border-[#a8a8a8] bg-white pl-[2px] text-[11px]" />
            <svg viewBox="0 0 16 16" className="absolute top-[2px] right-[2px] size-4" fill="none" stroke="#333" aria-hidden="true">
              <circle cx="10" cy="6" r="4.500" />
              <circle cx="10" cy="6" r="2.500" stroke="#999" />
              <path d="M7 9l-5 5M6 8.500l-5 5" />
            </svg>
          </div>
          <End />
        </Toolbar>
        <Toolbar>
          <Tool icon="fit" />
          <Drop />
          <Tool icon="shade" />
          <Drop />
          <Tool icon="cube" />
          <Drop />
          <Sep />
          <Tools names={['section', 'section2']} />
          <End />
        </Toolbar>
        <Toolbar>
          <Tool icon="palette" />
          <Sep />
          <Tool icon="mirrorview" />
          <Drop />
          <Sep />
          <Tool icon="pmi" />
          <Drop />
          <Tool icon="measure" />
          <End />
        </Toolbar>
      </div>

      <div className="flex h-[70px] shrink-0">
        <Toolbar first>
          <BigTool icon="profile" label="型材" />
          <BigTool icon="line" label="直线" />
          <BigTool icon="arc" label="圆弧" />
          <BigTool icon="circle" label="圆" />
          <BigTool icon="fillet" label="圆角" />
          <BigTool icon="chamfer" label="倒斜角" />
          <BigTool icon="rect" label="矩形" active />
          <BigTool icon="point" label="点" />
          <BigTool icon="project" label="投影曲线" />
          <Sep />
          <BigTool icon="constrain" label="几何约束" />
          <BigTool icon="symmetric" label="设为对称" />
          <End />
        </Toolbar>
      </div>

      <div className="flex h-[34px] shrink-0">
        <Toolbar first>
          <Tools names={['nodes', 'layers', 'layerset']} />
          <Sep />
          <Tool icon="tag" />
          <Sep />
          <Tools names={['check1', 'check2', 'check3']} />
          <Sep />
          <Tool icon="abc" />
          <End />
        </Toolbar>
        <Toolbar>
          <Tools names={['bend1', 'bend2', 'ruler']} />
          <End />
        </Toolbar>
        <Toolbar>
          <Tools names={['spring', 'spring2', 'roller']} />
          <Sep />
          <Tool icon="springdel" />
          <End />
        </Toolbar>
        <div className="w-[93px] shrink-0" />
        <Toolbar>
          <Tools names={['triangle', 'tabletri', 'folder1', 'folder2', 'note', 'brushdim']} />
          <Sep />
          <Tool icon="binoc" />
          <End />
        </Toolbar>
        <Toolbar>
          <Tools names={['lockcubes', 'lockcubes']} />
          <End />
        </Toolbar>
      </div>

      <div className="flex h-[34px] shrink-0">
        <Toolbar first>
          <Tools names={['tickpencil', 'listpencil', 'grid', 'axes']} />
          <End />
        </Toolbar>
        <Toolbar>
          <Tool icon="profiledim" />
          <Sep />
          <Tol main="1.00" />
          <Tol main="1.00" subs={['±.05']} />
          <Tol main="1.00" subs={['+.05', '−.02']} />
          <Tol main="1.00" subs={['+.05', '−.00']} />
          <Tol main="1.00" subs={['+.00', '−.02']} />
          <Tool>
            <span className="border border-[#8c8c8c] font-['Liberation_Sans'] text-[11px] leading-[11px] text-[#8c8c8c]">1.00</span>
          </Tool>
          <Tol main="(1.00)" />
          <Tol main="10H7" />
          <Tol main="10H7" subs={['(10.01)', '10']} />
          <Tol main="10H7" subs={['(0.015)', '0']} />
          <Tol main="10" subs={['(0.015)', '0']} />
          <Sep />
          <Tools names={['radial1', 'radial2']} />
          <Sep />
          <Tools names={['diameter1', 'diameter2', 'back']} />
          <End />
        </Toolbar>
      </div>

      <div className="flex h-8 shrink-0 items-center border-b border-[#899192] pl-px">
        <Combo label="选择过滤器" value="没有选择过滤器" width="w-[133px] mr-[7px]" />
        <Combo label="选择范围" value="仅在工作部件内" width="w-[140px] mr-[5px]" />
        <Filter icon="selA" />
        <FilterSep />
        <Filter icon="selB" />
        <Filter icon="selC" />
        <FilterDrop />
        <Filter icon="selD" />
        <FilterSep />
        <Filter icon="selE" />
        <FilterDrop />
        <FilterSep />
        <Snap icon="selF" />
        <Snap icon="selG" />
        <Sep />
        <Snap icon="snapAll" active />
        <Snap icon="snapSet" />
        <Snap icon="snapEnd" active />
        <Snap icon="snapMid" active />
        <Snap icon="snapPole" />
        <Snap icon="snapInt" />
        <Snap icon="snapCen" active />
        <Snap icon="snapQuad" />
        <Snap icon="snapPt" active />
        <Snap icon="snapOn" active />
        <Sep />
        <Snap icon="snapGrid" />
        <span className="mr-[2px] ml-auto flex self-stretch">
          <End />
        </span>
      </div>
    </>
  );
}

function ResourceBar() {
  const tab = 'flex w-full justify-center border-r border-[#aeaeae] bg-[#dcdcdc]';
  return (
    <nav className="flex w-7 shrink-0 flex-col">
      <div className={`${tab} h-[167px] flex-col items-center justify-start border-b`}>
        <button type="button" aria-label="资源条选项" className="mt-[6px] mr-1 mb-8 text-[#333]">
          <Icon name="gear" size="size-[13px]" />
        </button>
        <div className="flex flex-col gap-[18px]">
          <button type="button" aria-label="装配导航器">
            <Icon name="assy" />
          </button>
          <button type="button" aria-label="约束导航器">
            <Icon name="constraints" />
          </button>
          <button type="button" aria-label="部件导航器">
            <Icon name="partnav" />
          </button>
        </div>
      </div>
      <button type="button" aria-label="重用库" className="flex h-11 items-center justify-center">
        <Icon name="books" />
      </button>
      <div className={`${tab} flex-1 flex-col items-center justify-start border-t pt-[19px]`}>
        <button type="button" aria-label="HD3D" className="mb-[30px]">
          <Icon name="info" />
        </button>
        <button type="button" aria-label="Web" className="mb-[30px]">
          <Icon name="webdoc" />
        </button>
        <button type="button" aria-label="历史记录" className="mb-[18px]">
          <Icon name="clock" />
        </button>
        <button type="button" aria-label="角色">
          <Icon name="people" />
        </button>
      </div>
    </nav>
  );
}

const nodes: TreeNode[] = [
  { label: 'Reusable Object Library (Example Only)', icon: 'folderTools' },
  { label: '2D Section Library', icon: 'sectionLib' },
  { label: 'GB Standard Parts', icon: 'lib' },
  { label: 'Reuse Examples', icon: 'lib' },
  { label: 'UDF Library', icon: 'lib' },
  { label: 'Fastener Assembly Configuration Library', icon: 'bolt', leaf: true },
  { label: 'Favorites', icon: 'star' },
];

const rows: (TreeNode | null)[] = Array.from({ length: 30 }, (_, i) => nodes[i] ?? null);

function Branch({ index, leaf }: { index: number; leaf?: boolean }) {
  return (
    <svg viewBox="0 0 19 20" className="h-5 w-[19px] shrink-0" fill="none" aria-hidden="true">
      <path
        d={`M9.500 ${index === 0 ? 10 : 0}V${index === nodes.length - 1 ? 10 : 20}M10 10.500h9`}
        stroke="#999"
        strokeDasharray="1 1"
      />
      {!leaf && (
        <g>
          <rect x="5.500" y="6.500" width="8" height="8" fill="#fff" stroke="#ccc" />
          <path d="M7 10.500h5M9.500 8v5" stroke="#222" />
        </g>
      )}
    </svg>
  );
}

function LibraryPanel() {
  return (
    <aside className="flex w-[332px] shrink-0 flex-col border-r border-[#858d8e] bg-white pr-[9px] pl-[6px]">
      <div className="flex h-7 shrink-0 items-center justify-between pt-[2px] pr-[7px] pl-1">
        <h2 className="text-[12px]">重用库</h2>
        <button type="button" aria-label="maximize panel" className="h-[11px] w-3 border border-t-2 border-[#222]" />
      </div>
      <div className="min-h-0 flex-1 overflow-hidden border-2 border-b-0 border-[#dcdcdc] bg-white">
        <table className="w-full table-fixed border-separate border-spacing-0 text-[12px]">
          <thead>
            <tr className="h-[21px] bg-[#f0f0f0]">
              <th className="border-r border-b border-[#d8d8d8] p-0 pt-[2px] pl-[6px] text-left font-normal">名称</th>
              <th className="w-3 border-b border-[#d8d8d8] p-0" />
            </tr>
          </thead>
          <tbody>
            {rows.map((node, i) => (
              <tr key={i} className={i % 2 ? 'bg-[#fafafa]' : 'bg-white'}>
                <td className="h-5 border-r border-b border-[#ececec] p-0">
                  {node && (
                    <div className="-my-px flex h-[19px] items-center">
                      <Branch index={i} leaf={node.leaf} />
                      <Icon name={node.icon} size="size-4" />
                      <span className="ml-[3px] whitespace-nowrap">{node.label}</span>
                    </div>
                  )}
                </td>
                <td className="border-b border-[#ececec] p-0" />
              </tr>
            ))}
          </tbody>
        </table>
      </div>
      <div className="h-[5px] shrink-0 border border-[#aaa] bg-[#dcdcdc]" />
      <div className="mb-[6px] shrink-0">
        {['搜索', '成员选择', '预览'].map((t) => (
          <button
            key={t}
            type="button"
            className="flex h-6 w-full items-center justify-between border-b-2 border-[#d0d0d0] pr-[6px] pl-[7px] text-[14px] leading-5 text-[#2c86b4]"
          >
            <span className="pt-1">{t}</span>
            <svg viewBox="0 0 10 8" className="h-2 w-[10px]" fill="none" stroke="currentColor" strokeWidth="2">
              <path d="M1 0l4 7 4-7" />
            </svg>
          </button>
        ))}
      </div>
    </aside>
  );
}

function Model() {
  const dim = '#6699cc';
  return (
    <svg viewBox="360 265 1212 745" className="h-[745px] w-[1212px]" fill="none" fontFamily="'Liberation Sans'" fontSize="13">
      {/* sketch rectangle */}
      <g stroke="#0000f0">
        <path d="M549.500 476.500H802" strokeWidth="2" />
        <path d="M802 476.500H838" stroke="#4a62dc" strokeWidth="2" />
        <path d="M549.500 476V531M838.500 476V531" strokeWidth="1.300" />
        <path d="M549.500 531V703.500H838V531" strokeWidth="2" />
        <path d="M684 476.500h19" stroke="#1030e0" strokeWidth="4" />
        <path d="M560.500 477v10.500H550M827.500 477v10.500H838M560.500 703v-11H550M827.500 703v-11H838" stroke="#2a5ac8" strokeWidth="1.500" />
      </g>
      <g fill="#0000f0">
        <circle cx="549.500" cy="476" r="4.200" />
        <circle cx="838.500" cy="476" r="4.200" />
        <circle cx="549.500" cy="703" r="4.200" />
        <circle cx="838.500" cy="703" r="4.200" />
      </g>

      {/* datum plane and axes */}
      <rect x="924" y="595.500" width="84.500" height="84" fill="#a7b7c5" stroke="#0a96f4" strokeWidth="2" />
      <path d="M970 570.500h63.500V637" stroke="#2222e0" strokeWidth="1.200" />
      <path d="M966 518v40" stroke="#5a5ae0" strokeWidth="1.400" />
      <path d="M966 532v9M966 550v6" stroke="#0a3a6a" strokeWidth="2" />
      <path d="M966 504l3.200 16h-6.400z" fill="#0000e0" />
      <path d="M1046 637.500h40" stroke="#0000d0" strokeWidth="1.400" />
      <path d="M1061 637.500h10" stroke="#1a8a2a" strokeWidth="1.600" />
      <path d="M1099 637.500l-16 3v-6z" fill="#0000e0" />

      {/* dimensions */}
      <g stroke={dim}>
        <path d="M550 519.500h288M813.500 477v226M841 566h124M948.500 638v70M937 637.500h24M844 703.500h116M802 476.500h30M802 702.500h36" />
      </g>
      <g fill={dim}>
        <path d="M550 519.500l11-2.500v5zM838 519.500l-11-2.500v5zM813.500 477l-2.500 11h5zM813.500 703l-2.500-11h5zM840 566l10-2.500v5zM965 566l-10-2.500v5zM948.500 638l-2.500 11h5zM948.500 703l-2.500-11h5z" />
        <g fontFamily="'Liberation Sans Narrow', 'Liberation Sans'" fontSize="14" textAnchor="middle">
          <text x="694" y="516">
            79
          </text>
          <text x="881" y="562">
            35
          </text>
          <text transform="translate(809 590) rotate(-90)">62</text>
          <text transform="translate(945 701) rotate(-90)">18</text>
        </g>
      </g>

      <path d="M966 637V573" stroke="#2f9a2f" strokeWidth="4" />
      <path d="M966 556l5 19h-10zM966 590l3 24-3 20-3-20z" fill="#2a8a2a" />
      <path d="M966 637.500h64" stroke="#dc3232" strokeWidth="4" />
      <path d="M1048 638l-19 5v-10z" fill="#dc3232" />
      <path d="M985 638.500l22-2.500 22 2.500-22 2.500z" fill="#a82020" />

      <g textAnchor="middle">
        <text x="966" y="503" fill="#0000e0">
          Z
        </text>
        <text x="1106" y="642" fill="#0000e0">
          Y
        </text>
        <text x="966" y="552" fontSize="11" fill="#2a8a2a">
          Y
        </text>
        <text x="1056" y="642" fill="#dc3232">
          X
        </text>
        <text x="966" y="642" fontSize="11" fill="#0a2a80">
          X
        </text>
        <text x="981" y="580" fill="#2f9a2f">
          YC
        </text>
        <text x="1018" y="633" fill="#dc3232">
          XC
        </text>
        <text x="976" y="638" fill="#1a5ae0">
          ZC
        </text>
      </g>

      {/* view triad */}
      <rect x="420.500" y="923.500" width="24" height="24" fill="#cdcfd1" stroke="#b5b5b5" />
      <path d="M419.500 922v24" stroke="#6078c0" strokeWidth="3" />
      <path d="M420 906l3.500 17h-7z" fill="#0a3cf0" />
      <path d="M424 948h22" stroke="#1a6a1a" strokeWidth="1.500" />
      <path d="M461 947.500l-16 3v-6z" fill="#2a9a2a" />
      <path d="M416 944h8v8h-8z" fill="#8a2020" />
      <path d="M416 944l8 8M424 944l-8 8" stroke="#e04040" />
      <g textAnchor="middle">
        <text x="420" y="906" fill="#0a3cf0">
          Z
        </text>
        <text x="466" y="952" fill="#2a9a2a">
          Y
        </text>
      </g>

      {/* cursor */}
      <circle cx="825.500" cy="793.500" r="11.500" stroke="#222" strokeDasharray="12 6" strokeDashoffset="-3" />
      <path d="M810.500 792.500h14v-14h2v14h14v2h-14v14h-2v-14h-14z" fill="#eee" stroke="#000" />
    </svg>
  );
}

function CoordBox() {
  return (
    <form className="absolute top-[561px] left-[498px] flex w-[100px] gap-[9px] border border-[#aeb2b2] bg-[#eff3f3] p-[3px] text-[12px]">
      <div className="w-[7px] bg-[radial-gradient(#b4b4b4_1px,transparent_1px)] bg-size-[4px_4px]" />
      <div className="flex flex-1 flex-col">
        <label className="flex h-[23px] items-center justify-between">
          XC
          <span className="flex h-[23px] w-[58px] items-center border border-[#a8a8a8] bg-white pl-1">
            <input defaultValue="-39" className="h-4 w-5 bg-[#0078d7] text-white" />
          </span>
        </label>
        <label className="flex h-[23px] items-center justify-between">
          YC
          <input defaultValue="-43" className="h-[23px] w-[58px] border border-[#a8a8a8] bg-white pl-1 text-black" />
        </label>
      </div>
    </form>
  );
}

function MethodButton({ label, active = false, children }: { label: string; active?: boolean; children: ReactNode }) {
  return (
    <button
      type="button"
      aria-label={label}
      aria-pressed={active}
      className={`size-8 border ${active ? 'border-[#a4c2be] bg-[#d6d6d6]' : 'border-[#aaa] bg-white'}`}
    >
      <svg viewBox="0 0 30 30" className="size-[30px]" fill="none" stroke="#000080" fontFamily="'Liberation Sans'" fontSize="8">
        {children}
      </svg>
    </button>
  );
}

function Num({ x, y, n }: { x: number; y: number; n: number }) {
  return (
    <text x={x} y={y} stroke="none" fill="#000">
      {n}
    </text>
  );
}

function RectangleDialog() {
  return (
    <section className="absolute top-[307px] left-[334px] w-[206px] border border-[#bcbcbc] bg-[#e8e8e8]">
      <header className="-mx-px -mt-px flex h-6 items-center bg-[#5d8880] pr-[10px] pl-2 text-white">
        <Icon name="gear" size="size-[14px]" />
        <h2 className="ml-[10px] text-[13px]">矩形</h2>
        <button type="button" aria-label="关闭" className="mt-[2px] ml-auto">
          <svg viewBox="0 0 12 12" className="size-3" stroke="#fff" strokeWidth="2">
            <path d="M1 1l10 10M11 1L1 11" />
          </svg>
        </button>
      </header>
      <div className="flex gap-[3px] px-[7px] pt-[6px] pb-[9px]">
        <div className="bg-white px-[5px] pb-1 shadow-sm">
          <h3 className="h-5 pl-1 text-[14px] leading-5 text-[#2c86b4]">矩形方法</h3>
          <div className="flex gap-[2px]">
            <MethodButton label="按 2 点" active>
              <path d="M7.500 10.500h16v9h-16z" />
              <g fill="#f00" stroke="none">
                <circle cx="7" cy="10" r="2" />
                <circle cx="24" cy="20" r="2" />
              </g>
              <Num x={2} y={8} n={1} />
              <Num x={23} y={28} n={2} />
            </MethodButton>
            <MethodButton label="按 3 点">
              <path d="M5.500 14 L20.500 7 L25 15 L10 22Z" />
              <g fill="#f00" stroke="none">
                <circle cx="5.500" cy="14" r="2" />
                <circle cx="20.500" cy="7" r="2" />
                <circle cx="10" cy="22" r="2" />
              </g>
              <Num x={3} y={11} n={2} />
              <Num x={23} y={8} n={3} />
              <Num x={5} y={28} n={1} />
            </MethodButton>
            <MethodButton label="从中心">
              <path d="M3.500 16 L18 8 L24 19 L9 27Z" />
              <g fill="#f00" stroke="none">
                <circle cx="18" cy="8" r="2" />
                <circle cx="21.500" cy="14" r="2" />
                <circle cx="14" cy="17" r="2" />
              </g>
              <Num x={12} y={8} n={3} />
              <Num x={24} y={12} n={2} />
              <Num x={8} y={22} n={1} />
            </MethodButton>
          </div>
        </div>
        <div className="bg-white px-[5px] pb-1 shadow-sm">
          <h3 className="h-5 pl-1 text-[14px] leading-5 text-[#2c86b4]">输入模式</h3>
          <div className="flex gap-[2px]">
            <MethodButton label="坐标模式" active>
              <path d="M5 8l9 14M14 8L5 22M16.500 8l4.500 7 4.500-7M21 15v7" strokeWidth="1.800" />
            </MethodButton>
            <MethodButton label="参数模式">
              <path d="M4.500 8v13M25.500 8v13M6 11.500h18" />
              <path d="M5 11.500l4-2.500v5zM25 11.500l-4-2.500v5z" fill="#000080" stroke="none" />
              <path d="M13 4l4 5M17 4l-4 5" />
              <path d="M4 21.500h22" stroke="#000" strokeWidth="2" />
            </MethodButton>
          </div>
        </div>
      </div>
    </section>
  );
}

function ImeBar() {
  return (
    <div className="absolute bottom-5 left-[774px] flex h-8 items-center">
      <svg viewBox="0 0 32 32" className="z-10 mb-1 size-8" aria-hidden="true">
        <path d="M5 4 L25 1 Q28 1 28.500 4 L32 23 Q32 26 29 27 L10 31 Q7 31 6 28 L1 8 Q1 5 5 4Z" fill="#f4591c" />
        <path d="M25 8 Q12 6 9 10 Q7 15 16 15 Q26 16 24 20 Q20 25 9 22" fill="none" stroke="#fff" strokeWidth="4.500" strokeLinecap="round" />
      </svg>
      <div className="-ml-4 flex h-[26px] items-center gap-2 border border-[#b5cfec] bg-white pr-1 pl-[21px] text-[#0a6fdc]">
        <svg viewBox="0 0 16 16" className="size-4" fill="none" stroke="currentColor" strokeWidth="2">
          <path d="M1.500 4.500h13v6h-13zM8 1v14" />
        </svg>
        <svg viewBox="0 0 16 16" className="size-4" fill="none" stroke="currentColor" strokeWidth="1.600">
          <circle cx="5" cy="6" r="2" />
          <path d="M11 9.500h2v1.500q0 2-2 3" strokeWidth="2.500" />
        </svg>
        <svg viewBox="0 0 16 16" className="size-4" fill="none" stroke="currentColor" strokeWidth="1.600">
          <rect x="5" y="0" width="6" height="9" rx="3" fill="currentColor" stroke="none" />
          <path d="M2.500 6.500q0 5 5.500 5t5.500-5M8 11v3M5 15h6" />
        </svg>
        <svg viewBox="0 0 16 16" className="size-4" fill="none" stroke="currentColor">
          <rect x="1" y="2.500" width="14" height="11" rx="1" strokeWidth="1.700" />
          <path d="M3 5.500h10M3 8h10" strokeWidth="1.500" strokeDasharray="1.600 1" />
          <path d="M5 11h6" strokeWidth="1.500" />
        </svg>
        <svg viewBox="0 0 16 16" className="size-4" fill="currentColor">
          <path d="M5 1q3 3 6 0l5 3-1.500 4-2.500-.5V15H4V7.500L1.500 8 0 4z" />
        </svg>
        <svg viewBox="0 0 16 16" className="size-4" fill="currentColor">
          <path d="M7 1h2v3h-2zM0 9q0-5 8-5.500Q16 4 16 9q0 5.500-8 5.500T0 9z" />
          <path d="M3 9h4M5 7v4" stroke="#fff" />
          <circle cx="11.500" cy="9" r="1.500" fill="none" stroke="#fff" />
        </svg>
        <svg viewBox="0 0 16 16" className="size-4" fill="currentColor">
          <rect x="1" y="1" width="6" height="6" rx="2" />
          <rect x="1" y="9" width="6" height="6" rx="2" />
          <rect x="9" y="9" width="6" height="6" rx="2" />
          <circle cx="12" cy="4" r="2.300" fill="none" stroke="currentColor" strokeWidth="1.600" />
        </svg>
        <svg viewBox="0 0 16 16" className="size-4" fill="currentColor">
          <path d="M8 0l2 3 4-.5L13.500 6 16 8l-2.500 2 .5 3.500-4-.5-1 3H7l-1-3-4 .5.500-3.500L0 8l2.500-2L2 2.500 6 3z" />
          <path d="M8 4.500a3 3 0 0 0-2.500 5M8 4.500a3 3 0 0 1 2.500 5M8 8v6" stroke="#fff" fill="none" />
          <circle cx="8" cy="8" r="1.400" fill="#fff" />
        </svg>
      </div>
    </div>
  );
}

function Watermark() {
  return (
    <div className="pointer-events-none absolute right-0 bottom-[7px] z-10 flex items-end gap-[2px]">
      <svg viewBox="0 0 42 40" className="mb-[2px] h-10 w-[42px]" aria-hidden="true">
        <defs>
          <linearGradient id="sw1" x1="0" x2="1">
            <stop offset="0" stopColor="#3f86c8" />
            <stop offset="1" stopColor="#8cc8dc" />
          </linearGradient>
          <linearGradient id="sw2" x1="0" x2="1">
            <stop offset="0" stopColor="#d8e070" />
            <stop offset="1" stopColor="#3fb878" />
          </linearGradient>
        </defs>
        <path d="M41 1 Q22 0 9 10 Q-2 20 1 32 Q4 25 12 22 Q18 21 22 17 Q15 20 13 15 Q15 5 41 1Z" fill="url(#sw1)" />
        <path d="M35 10 Q40 12 41 18 Q41 26 32 33 Q21 40 3 39 Q16 35 23 28 Q29 21 20 21 Q17 15 24 13 Q29 11 35 10Z" fill="url(#sw2)" />
        <path d="M37 5 Q23 9 20 14 Q18 19 25 19 Q15 24 2 32 Q5 24 12 20 Q12 9 37 5Z" fill="#4f97cf" opacity=".6" />
      </svg>
      <div className="font-bold">
        <p className="text-[21px] leading-6 text-[#5f93cd]/90">极光下载站</p>
        <p className="font-['Liberation_Sans'] text-[17px] leading-[18px] font-normal text-[#58bf70]">www.xz7.com</p>
      </div>
    </div>
  );
}

function RedArrow({ from, to }: { from: [number, number]; to: [number, number] }) {
  const len = Math.hypot(to[0] - from[0], to[1] - from[1]);
  const angle = (Math.atan2(to[1] - from[1], to[0] - from[0]) * 180) / Math.PI;
  return (
    <path
      transform={`translate(${from[0]} ${from[1]}) rotate(${angle})`}
      d={`M0 -1.500 L${len - 22} -1.500 L${len - 26} -6.500 L${len} 0 L${len - 26} 6.500 L${len - 22} 1.500 L0 1.500Z`}
      fill="#ff0000"
      stroke="#d80000"
      strokeWidth=".6"
    />
  );
}

function Annotations() {
  return (
    <svg viewBox="0 0 1583 1032" className="pointer-events-none absolute top-0 left-0 z-20 h-[1032px] w-[1583px] drop-shadow-[2px_2px_2px_rgba(0,0,0,0.5)]" aria-hidden="true">
      <RedArrow from={[109, 279]} to={[57, 91]} />
      <RedArrow from={[669, 315]} to={[489, 137]} />
      <RedArrow from={[367, 491]} to={[358, 388]} />
      <RedArrow from={[414, 674]} to={[513, 623]} />
    </svg>
  );
}

function StatusBar() {
  return (
    <footer className="relative flex h-[22px] shrink-0 items-center justify-between border-t border-[#aeaeae] bg-white pr-14 pb-[2px] text-[11px] text-black">
      <span className="font-medium">选择矩形的第一点</span>
      <span className="flex gap-[5px] pt-[2px]">
        <Icon name="flag" size="size-[14px]" />
        <svg viewBox="0 0 16 14" className="h-[14px] w-4" fill="none" stroke="#777">
          <path d="M.5 4V.5H4M12 .5h3.500V4M15.500 10v3.500H12M4 13.500H.5V10" />
          <rect x="3.500" y="3" width="9" height="8" fill="#6aa8d8" stroke="#444" />
        </svg>
      </span>
    </footer>
  );
}

function BackgroundEdge() {
  return (
    <div className="flex w-[7px] shrink-0 flex-col overflow-hidden bg-white">
      <div className="h-9 bg-[#e6e6e6]" />
      <div className="mt-[6px] h-7 bg-[#f2f2f2]" />
      <div className="flex h-[35px] items-center justify-center pt-[6px] text-[12px] leading-none text-[#4a3a9a]">u</div>
      <div className="h-[30px] bg-[#e6e6e6]" />
      <div className="flex-1 bg-[#444443]" />
      <div className="h-[66px] bg-black" />
      <div className="h-4 bg-[#f6f6f6]" />
    </div>
  );
}

export default function App() {
  return (
    <div className="relative flex h-screen overflow-hidden bg-white font-['Noto_Sans','Noto_Sans_CJK_SC',sans-serif] text-[#222]">
      <div className="flex min-w-0 flex-1 flex-col border-t border-r border-[#a9a9a9] bg-white pr-[3px]">
        <TitleBar />
        <MenuBar />
        <Ribbon />
        <main className="flex min-h-0 flex-1">
          <ResourceBar />
          <LibraryPanel />
          <div className="relative min-w-0 flex-1 overflow-hidden bg-[#d3d4d6]">
            <Model />
            <CoordBox />
            <ImeBar />
          </div>
        </main>
        <div className="relative shrink-0">
          <StatusBar />
          <Watermark />
        </div>
      </div>
      <BackgroundEdge />
      <RectangleDialog />
      <Annotations />
    </div>
  );
}
